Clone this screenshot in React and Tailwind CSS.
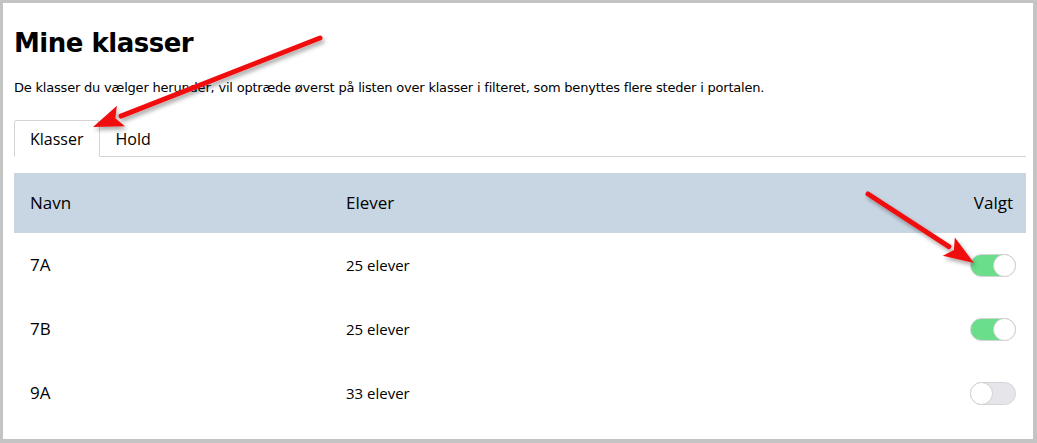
import { useState } from "react";

const rows = [
  { navn: "7A", elever: "25 elever", valgt: true },
  { navn: "7B", elever: "25 elever", valgt: true },
  { navn: "9A", elever: "33 elever", valgt: false },
];

const Toggle = ({ on, onClick }) => (
  <button
    onClick={onClick}
    className={`relative w-[46px] h-[23px] rounded-full border border-[#d4d4d8] ${on ? "bg-[#6ade8a]" : "bg-[#e5e5ea]"}`}
  >
    <span
      className={`absolute top-[-1px] w-[23px] h-[23px] rounded-full bg-white border border-[#d0d0d0] ${on ? "right-[-1px]" : "left-[-1px]"}`}
    />
  </button>
);

// red annotation arrows drawn over the page
const Arrow = ({ x1, y1, x2, y2 }) => {
  const ang = Math.atan2(y2 - y1, x2 - x1);
  const len = 30;
  const w = 11;
  const bx = x2 - Math.cos(ang) * len;
  const by = y2 - Math.sin(ang) * len;
  const px = -Math.sin(ang) * w;
  const py = Math.cos(ang) * w;
  return (
    <g filter="url(#shadow)">
      <line x1={x1} y1={y1} x2={bx} y2={by} stroke="#f01010" strokeWidth="5" strokeLinecap="round" />
      <polygon points={`${x2},${y2} ${bx + px},${by + py} ${bx + Math.cos(ang) * 6},${by + Math.sin(ang) * 6} ${bx - px},${by - py}`} fill="#f01010" />
    </g>
  );
};

export default function App() {
  const [tab, setTab] = useState("Klasser");
  const [data, setData] = useState(rows);

  const toggle = (i) =>
    setData(data.map((r, j) => (j === i ? { ...r, valgt: !r.valgt } : r)));

  return (
    <div className="relative w-[1037px] h-[443px] bg-white border-t-[3px] border-l-[3px] border-r-[4px] border-b-[4px] border-[#c4c4c4] overflow-hidden">
      <div className="pl-[11px] pr-[7px] pt-[22px]">
        <h1 className="font-['DejaVu_Sans',sans-serif] font-bold text-[26px] leading-[36px] tracking-[-0.5px] text-black">
          Mine klasser
        </h1>
        <p className="mt-[17px] font-['DejaVu_Sans',sans-serif] text-[13px] leading-[20px] tracking-[-0.2px] text-black">
          De klasser du vælger herunder, vil optræde øverst på listen over klasser i filteret, som benyttes flere steder i portalen.
        </p>

        <div className="mt-[22px] flex border-b border-[#d4d4d4] font-['Open_Sans',sans-serif] text-[16px] text-black">
          {["Klasser", "Hold"].map((t) => (
            <button
              key={t}
              onClick={() => setTab(t)}
              className={`h-[37px] px-[15px] -mb-px ${tab === t ? "border border-[#d4d4d4] border-b-white rounded-t-[3px] bg-white" : "border border-transparent"}`}
            >
              {t}
            </button>
          ))}
        </div>

        <div className="mt-[16px] font-['Open_Sans',sans-serif] text-black">
          <div className="flex items-center h-[60px] bg-[#c8d6e3] pl-[16px] pr-[13px] text-[17px]">
            <div className="w-[316px]">Navn</div>
            <div className="flex-1">Elever</div>
            <div>Valgt</div>
          </div>
          {data.map((r, i) => (
            <div key={r.navn} className="flex items-center h-[64px] pl-[16px] pr-[10px]">
              <div className="w-[316px] text-[17px]">{r.navn}</div>
              <div className="flex-1 text-[15px]">{r.elever}</div>
              <Toggle on={r.valgt} onClick={() => toggle(i)} />
            </div>
          ))}
        </div>
      </div>

      <svg className="absolute left-0 top-0 pointer-events-none" width="1037" height="443">
        <defs>
          <filter id="shadow" x="-20%" y="-20%" width="140%" height="140%">
            <feDropShadow dx="2" dy="3" stdDeviation="2" floodColor="#000" floodOpacity="0.35" />
          </filter>
        </defs>
        <Arrow x1={317} y1={35} x2={90} y2={124} />
        <Arrow x1={865} y1={191} x2={971} y2={260} />
      </svg>
    </div>
  );
}
